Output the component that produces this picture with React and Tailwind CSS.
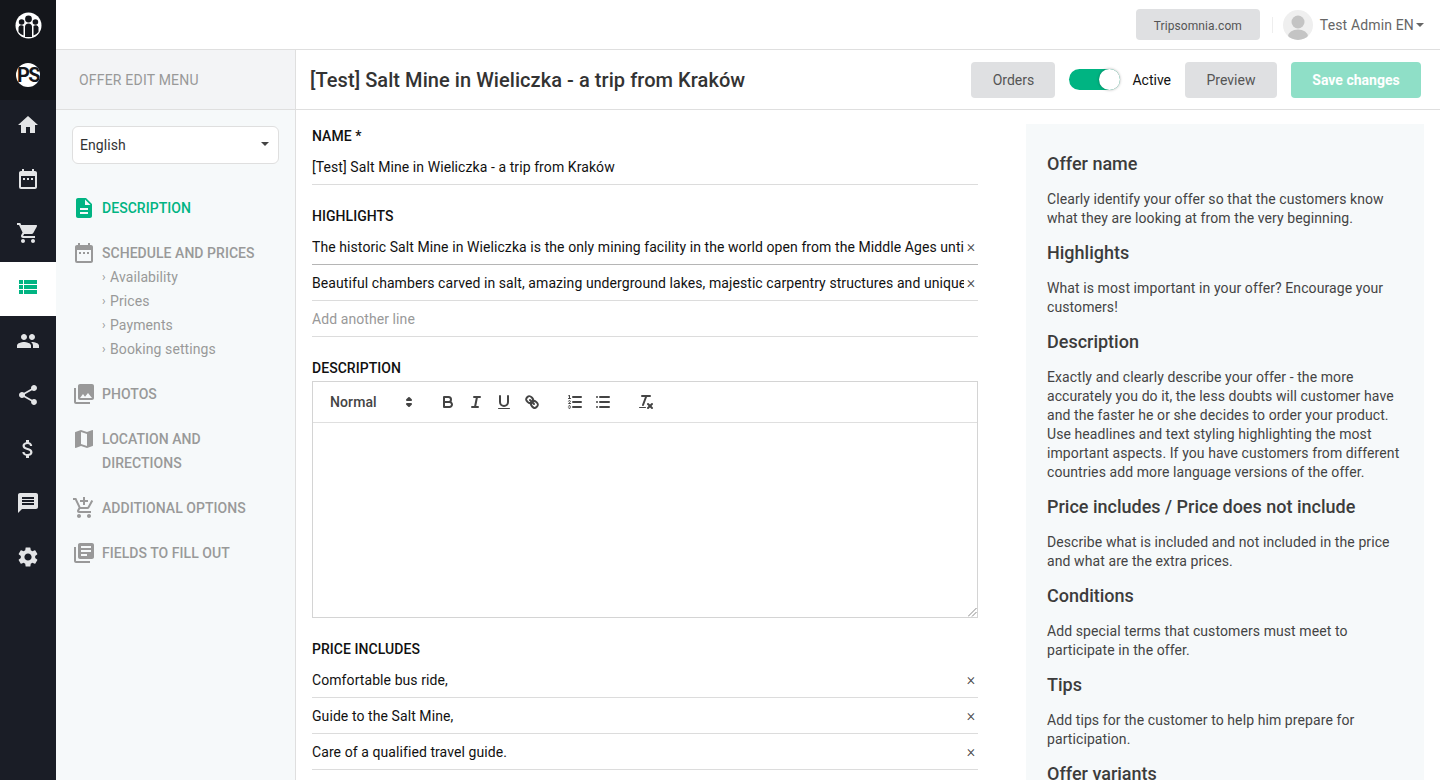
import React from "react";
import {
  MdHome, MdDateRange, MdShoppingCart, MdViewList, MdPeople, MdShare, MdAttachMoney, MdMessage, MdSettings,
  MdDescription, MdPhotoLibrary, MdMap, MdAddShoppingCart, MdLibraryBooks,
} from "react-icons/md";

const Q = ({ children }) => (
  <span className="flex h-6 w-7 shrink-0 items-center justify-center">
    <svg viewBox="0 0 18 18" className="h-[18px] w-[18px]" fill="none" stroke="#444" strokeWidth="2" strokeLinecap="round" strokeLinejoin="round">
      {children}
    </svg>
  </span>
);

function Rail() {
  const items = [
    [MdHome], [MdDateRange], [MdShoppingCart], [MdViewList, true], [MdPeople], [MdShare], [MdAttachMoney], [MdMessage], [MdSettings],
  ];
  return (
    <div className="flex w-14 shrink-0 flex-col bg-[#1a1d26]">
      <div className="flex h-[100px] flex-col items-center bg-[#14161b]">
        <div className="mt-3 h-[27px]">
          <svg width="27" height="27" viewBox="0 0 27 27">
            <circle cx="13.5" cy="13.5" r="13" fill="#fff" />
            <circle cx="13.5" cy="7" r="3.4" fill="#14161b" />
            <circle cx="6.6" cy="10" r="2.8" fill="#14161b" />
            <circle cx="20.4" cy="10" r="2.8" fill="#14161b" />
            <path d="M10 25v-10a3.500 3.500 0 0 1 7 0v10z" fill="#14161b" />
            <path d="M3.500 20v-4.500a3 3 0 0 1 5-1.500v9.500a10 10 0 0 1-5-3.500z" fill="#14161b" />
            <path d="M23.500 20v-4.500a3 3 0 0 0-5-1.500v9.500a10 10 0 0 0 5-3.500z" fill="#14161b" />
          </svg>
        </div>
        <div className="mt-[24px] flex h-6 w-6 items-center justify-center overflow-hidden rounded-full bg-white font-['Roboto',sans-serif] text-[20px] font-bold leading-none tracking-[-1.5px] text-[#14161b]">
          PS
        </div>
      </div>
      {items.map(([Icon, active], i) => (
        <div key={i} className={`flex h-[54px] items-start justify-center pt-[13px] ${active ? "bg-white text-[#00b482]" : "text-[#e3e4e6]"}`}>
          <Icon size={24} />
        </div>
      ))}
    </div>
  );
}

function MenuItem({ icon: Icon, active, lines, sub }) {
  return (
    <div className="mb-[21px] flex gap-[6px]">
      <Icon size={24} className={active ? "shrink-0 text-[#00b482]" : "shrink-0 text-[#999]"} />
      <div>
        {lines.map((l) => (
          <div key={l} className={`text-[14px] font-medium leading-6 tracking-[0.04px] ${active ? "text-[#00b482]" : "text-[#999]"}`}>{l}</div>
        ))}
        {sub && sub.map((s) => (
          <div key={s} className="flex h-6 items-center text-[14px] tracking-[0.1px] text-[#999]">
            <span className="w-2 text-[12px]">›</span>{s}
          </div>
        ))}
      </div>
    </div>
  );
}

function Row({ text, x, muted, dark }) {
  return (
    <div className={`flex h-9 items-center border-b ${dark ? "border-[#b5b5b5]" : "border-[#dcdcdc]"} text-[14px]`}>
      <span className={`min-w-0 flex-1 overflow-hidden whitespace-nowrap pt-[1px] tracking-[0.08px] ${muted ? "text-[#999]" : "text-[#111]"}`}>{text}</span>
      {x && <span className="flex w-[14px] shrink-0 justify-center pt-[1px] text-[16px] font-light leading-none text-[#444]">×</span>}
    </div>
  );
}

const Label = ({ children, className = "" }) => (
  <div className={`text-[14px] font-medium leading-5 tracking-[0.05px] text-[#111] ${className}`}>{children}</div>
);

const help = [
  ["Offer name", ["Clearly identify your offer so that the customers know", "what they are looking at from the very beginning."]],
  ["Highlights", ["What is most important in your offer? Encourage your", "customers!"]],
  ["Description", ["Exactly and clearly describe your offer - the more", "accurately you do it, the less doubts will customer have", "and the faster he or she decides to order your product.", "Use headlines and text styling highlighting the most", "important aspects. If you have customers from different", "countries add more language versions of the offer."]],
  ["Price includes / Price does not include", ["Describe what is included and not included in the price", "and what are the extra prices."]],
  ["Conditions", ["Add special terms that customers must meet to", "participate in the offer."]],
  ["Tips", ["Add tips for the customer to help him prepare for", "participation."]],
  ["Offer variants", []],
];

export default function App() {
  return (
    <div className="flex h-[780px] w-[1440px] overflow-hidden bg-white font-['Roboto',sans-serif]">
      <Rail />
      <div className="flex min-w-0 flex-1 flex-col">
        <div className="flex h-[50px] shrink-0 items-center justify-end border-b border-[#dfdfdf] pr-[16px]">
          <div className="flex h-[31px] w-[124px] items-center justify-center rounded bg-[#dfe0e2] pt-[2px] text-[12px] tracking-[0.1px] text-[#555]">Tripsomnia.com</div>
          <div className="ml-3 h-[16px] w-px bg-[#eee]" />
          <div className="ml-[10px] flex h-[30px] w-[30px] items-end justify-center overflow-hidden rounded-full bg-[#efefef]">
            <svg width="22" height="27" viewBox="0 0 22 27" fill="#c4c4c4"><circle cx="11" cy="9" r="6.500" /><ellipse cx="11" cy="23.500" rx="10" ry="7" /></svg>
          </div>
          <span className="ml-[7px] pt-[1px] text-[14px] tracking-[0.15px] text-[#666]">Test Admin EN</span>
          <span className="ml-[2px] mt-[1px] h-0 w-0 border-x-[4px] border-t-[4px] border-x-transparent border-t-[#666]" />
        </div>
        <div className="flex h-[60px] shrink-0 border-b border-[#dfdfdf]">
          <div className="flex w-[240px] shrink-0 items-center border-r border-[#dfdfdf] bg-[#f3f4f6] pl-[23px] pt-[2px] text-[14px] tracking-[0.2px] text-[#999]">OFFER EDIT MENU</div>
          <div className="flex min-w-0 flex-1 items-center pl-[14px] pr-[19px]">
            <div className="flex-1 whitespace-nowrap text-[20px] font-medium tracking-[0.06px] text-[#333]">[Test] Salt Mine in Wieliczka - a trip from Kraków</div>
            <div className="flex h-9 w-[84px] items-center justify-center rounded bg-[#dfe0e2] pt-[2px] text-[14px] text-[#555]">Orders</div>
            <div className="ml-[14px] flex h-[21px] w-[51px] justify-end rounded-full bg-[#00b482]">
              <div className="h-[21px] w-[21px] rounded-full bg-white shadow-[0_0_3px_rgba(0,0,0,0.35)]" />
            </div>
            <span className="ml-[12px] pt-[2px] text-[14px] text-[#111]">Active</span>
            <div className="ml-[14px] flex h-9 w-[92px] items-center justify-center rounded bg-[#dfe0e2] pt-[2px] text-[14px] text-[#555]">Preview</div>
            <div className="ml-[14px] flex h-9 w-[130px] items-center justify-center rounded bg-[#8fdfc7] pt-[2px] text-[14px] font-bold text-white">Save changes</div>
          </div>
        </div>
        <div className="flex min-h-0 flex-1">
          <div className="w-[240px] shrink-0 border-r border-[#dfdfdf] bg-[#f6f9fa] px-4 pt-4">
            <div className="mb-8 flex h-[38px] items-center justify-between rounded-md border border-[#dfdfdf] bg-white pl-[7px] pr-[9px] text-[14px] tracking-[0.08px] text-[#333]">
              English
              <span className="mb-[3px] h-0 w-0 border-x-[4px] border-t-[4px] border-x-transparent border-t-[#444]" />
            </div>
            <MenuItem icon={MdDescription} active lines={["DESCRIPTION"]} />
            <MenuItem icon={MdDateRange} lines={["SCHEDULE AND PRICES"]} sub={["Availability", "Prices", "Payments", "Booking settings"]} />
            <MenuItem icon={MdPhotoLibrary} lines={["PHOTOS"]} />
            <MenuItem icon={MdMap} lines={["LOCATION AND", "DIRECTIONS"]} />
            <MenuItem icon={MdAddShoppingCart} lines={["ADDITIONAL OPTIONS"]} />
            <MenuItem icon={MdLibraryBooks} lines={["FIELDS TO FILL OUT"]} />
          </div>
          <div className="w-[730px] shrink-0 pl-4 pr-[48px] pt-4">
            <Label>NAME *</Label>
            <div className="mt-[3px]"><Row text="[Test] Salt Mine in Wieliczka - a trip from Kraków" /></div>
            <Label className="mt-[21px]">HIGHLIGHTS</Label>
            <div className="mt-[3px]">
              <Row dark x text="The historic Salt Mine in Wieliczka is the only mining facility in the world open from the Middle Ages until today, visited by millions." />
              <Row x text="Beautiful chambers carved in salt, amazing underground lakes, majestic carpentry structures and unique statues made of salt." />
              <Row muted text="Add another line" />
            </div>
            <Label className="mt-[21px]">DESCRIPTION</Label>
            <div className="mt-[3px] h-[237px] border border-[#d4d4d4]">
              <div className="flex h-[41px] items-center border-b border-[#dfdfdf] pl-2">
                <div className="mr-[15px] flex w-[98px] items-center justify-between pl-[9px] pr-[1px] text-[14px] font-medium tracking-[0.1px] text-[#444]">
                  Normal
                  <svg viewBox="0 0 18 18" className="h-[18px] w-[18px]" fill="#444"><polygon points="7 11 9 13 11 11" stroke="#444" strokeLinejoin="round" strokeWidth="2" /><polygon points="7 7 9 5 11 7" stroke="#444" strokeLinejoin="round" strokeWidth="2" /></svg>
                </div>
                <Q><path d="M5,4H9.500A2.500,2.500,0,0,1,12,6.500v0A2.500,2.500,0,0,1,9.500,9H5V4Z" /><path d="M5,9h5.500A2.500,2.500,0,0,1,13,11.500v0A2.500,2.500,0,0,1,10.500,14H5V9Z" /></Q>
                <Q><line x1="7" x2="13" y1="4" y2="4" /><line x1="5" x2="11" y1="14" y2="14" /><line x1="8" x2="10" y1="14" y2="4" /></Q>
                <Q><path d="M5,3V9a4.012,4.012,0,0,0,4,4H9a4.012,4.012,0,0,0,4-4V3" /><rect x="3" y="15" width="12" height="1" rx=".5" fill="#444" stroke="none" /></Q>
                <Q><line x1="7" x2="11" y1="7" y2="11" /><path d="M8.900,4.577a3.476,3.476,0,0,1,.36,4.679A3.476,3.476,0,0,1,4.577,8.900C3.185,7.500,2.035,6.400,4.217,4.217S7.500,3.185,8.900,4.577Z" /><path d="M13.423,9.100a3.476,3.476,0,0,0-4.679-.36,3.476,3.476,0,0,0,.36,4.679c1.392,1.392,2.500,2.542,4.679.36S14.815,10.500,13.423,9.100Z" /></Q>
                <span className="w-[15px] shrink-0" />
                <Q><line x1="7" x2="15" y1="4" y2="4" /><line x1="7" x2="15" y1="9" y2="9" /><line x1="7" x2="15" y1="14" y2="14" /><line x1="2.500" x2="4.500" y1="5.500" y2="5.500" strokeWidth="1" /><path d="M3.500,6A0.500,0.500,0,0,1,3,5.500V3.085l-0.276.138A0.500,0.500,0,0,1,2.053,3c-0.124-.247-0.023-0.324.224-0.447l1-.5A0.500,0.500,0,0,1,4,2.500v3A0.500,0.500,0,0,1,3.500,6Z" fill="#444" stroke="none" /><path d="M4.500,10.500h-2c0-.234,1.850-1.076,1.850-2.234A0.959,0.959,0,0,0,2.500,8.156" strokeWidth="1" /><path d="M2.500,14.846a0.959,0.959,0,0,0,1.850-.109A0.700,0.700,0,0,0,3.750,14a0.688,0.688,0,0,0,.6-0.736,0.959,0.959,0,0,0-1.850-.109" strokeWidth="1" /></Q>
                <Q><line x1="6" x2="15" y1="4" y2="4" /><line x1="6" x2="15" y1="9" y2="9" /><line x1="6" x2="15" y1="14" y2="14" /><line x1="3" x2="3" y1="4" y2="4" /><line x1="3" x2="3" y1="9" y2="9" /><line x1="3" x2="3" y1="14" y2="14" /></Q>
                <span className="w-[15px] shrink-0" />
                <Q><line x1="5" x2="13" y1="3" y2="3" /><line x1="6" x2="9.350" y1="12" y2="3" /><line x1="11" x2="15" y1="11" y2="15" /><line x1="15" x2="11" y1="11" y2="15" /><rect x="2" y="14" width="7" height="1" rx=".5" fill="#444" stroke="none" /></Q>
              </div>
              <div className="flex h-[194px] items-end justify-end">
                <svg width="9" height="9" viewBox="0 0 9 9" stroke="#888" strokeWidth="1"><line x1="0" y1="8.500" x2="8.500" y2="0" /><line x1="4" y1="8.500" x2="8.500" y2="4" /></svg>
              </div>
            </div>
            <Label className="mt-[21px]">PRICE INCLUDES</Label>
            <div className="mt-[3px]">
              <Row x text="Comfortable bus ride," />
              <Row x text="Guide to the Salt Mine," />
              <Row x text="Care of a qualified travel guide." />
            </div>
          </div>
          <div className="mt-[14px] w-[398px] shrink-0 overflow-hidden bg-[#f6f9fa] px-[21px] pt-[27px]">
            {help.map(([h, ps]) => (
              <div key={h}>
                <div className="mb-[14px] text-[18px] font-medium leading-[25px] text-[#3c3c3c]">{h}</div>
                <div className="mb-[12px] text-[14px] leading-[19px] tracking-[0.09px] text-[#444]">
                  {ps.map((p) => <div key={p} className="whitespace-nowrap">{p}</div>)}
                </div>
              </div>
            ))}
          </div>
        </div>
      </div>
    </div>
  );
}
